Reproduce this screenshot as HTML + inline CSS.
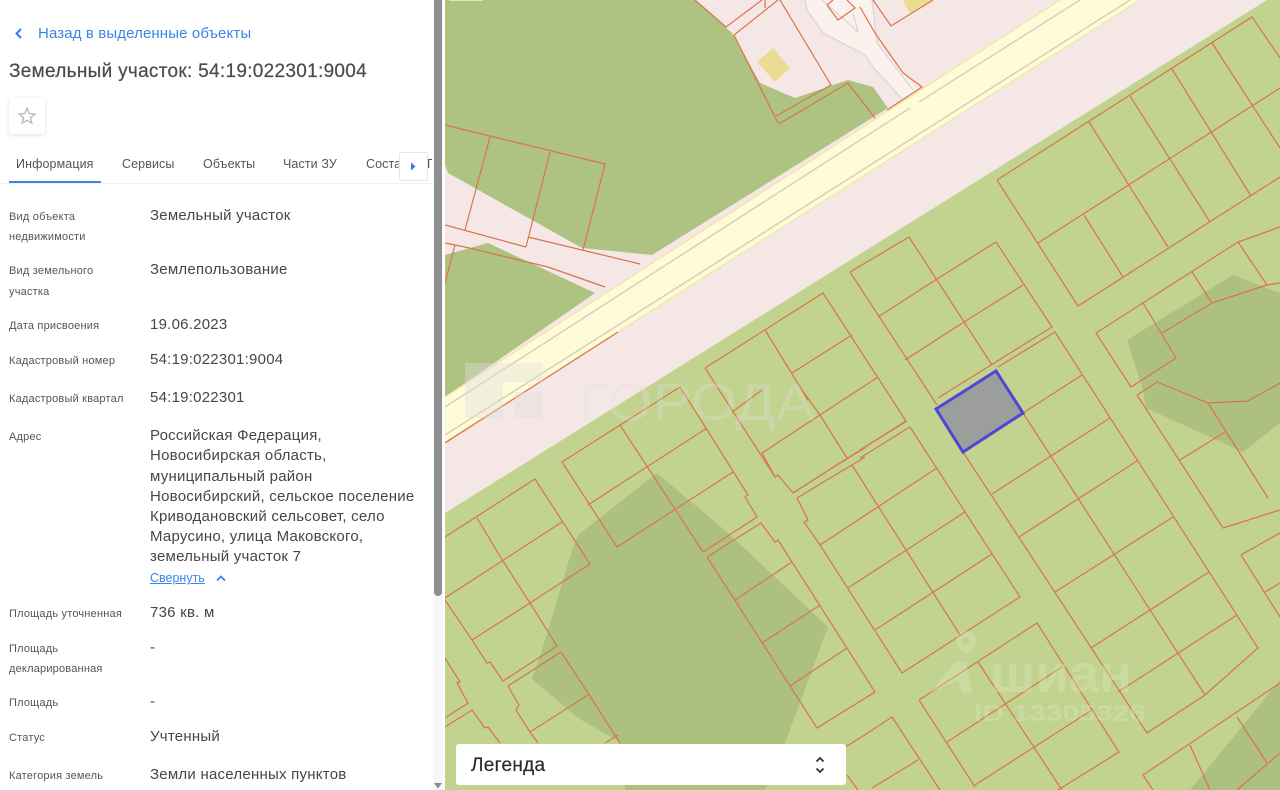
<!DOCTYPE html>
<html lang="ru"><head><meta charset="utf-8"><title>Земельный участок</title>
<style>
html,body{margin:0;padding:0;width:1280px;height:790px;overflow:hidden;background:#fff}
body{font-family:"Liberation Sans","DejaVu Sans",sans-serif;position:relative}
#map{position:absolute;left:445px;top:0;width:835px;height:790px;filter:blur(.35px)}
#panel{position:absolute;left:0;top:0;width:445px;height:790px;background:#fff;overflow:hidden}
.t{position:absolute;white-space:nowrap;line-height:20px;height:20px;filter:blur(.25px)}
.l{left:9px;font-size:11px;color:#555;letter-spacing:.2px;margin-top:1px}
.v{left:150px;font-size:15px;color:#464646;letter-spacing:.24px;margin-top:1px}
.tab{top:154px;font-size:12.5px;color:#555;letter-spacing:.1px}
#legend{position:absolute;left:456px;top:744px;width:390px;height:41px;background:#fff;border-radius:3px}
</style></head><body>
<svg id="map" viewBox="445 0 835 790" xmlns="http://www.w3.org/2000/svg">
<rect x="445" y="0" width="835" height="790" fill="#c2d38f"/>
<polygon points="445,513 1267,0 445,0" fill="#f5e7e6"/>
<polygon points="805,0 807,10 823,33 865,55 873,67 903,100 918,90 877,43 872,0" fill="#fbf1ed"/>
<polygon points="445,0 695,0 732,33 760,83 795,98 848,80 873,87 888,108 652,255 582,248 532,220 448,173 445,165" fill="#aec281"/>
<polygon points="445,255 488,243 595,293 445,397" fill="#aec281"/>
<polygon points="578,535 657,473 728,533 828,627 785,743 765,790 625,790 622,743 578,718 532,679 542,650 555,607 572,550" fill="#aec080"/>
<polygon points="1233,275 1280,293 1280,423 1243,452 1146,408 1143,390 1127,340" fill="#aec080"/>
<polygon points="1280,680 1190,790 1280,790" fill="#aec080"/>
<polygon points="445,397 1060,0 1140,0 445,442" fill="#fffbd9"/>
<path d="M445,397L1060,0M445,442L1140,0" stroke="#f3e5a2" stroke-width="1.2" fill="none"/>
<path d="M445,407L910,108M919,102L1080,0M445,435L1130,0" stroke="#cfd4b4" stroke-width="1.5" fill="none"/>
<path d="M805,0L807,10L823,33L865,55L873,67L903,100M822,0L858,32L853,13M872,0L877,43L913,90" stroke="#dcd7d4" stroke-width="1.3" fill="none"/>
<polygon points="773,48 790,68 775,82 757,62" fill="#ebdc93"/>
<polygon points="903,0 933,0 910,14" fill="#ebdc93"/>
<g fill="none" stroke="#d9744a" stroke-width="1.2">
<path d="M445,125L605,164L583,250M490,137L465,230M550,152L526,247M445,225L526,247M528,237L640,264M445,243L465,247L548,267L605,287M455,245L445,283"/>
<path d="M695,0L726,27L762,0M765,0L765,8M778,0L734,35L778,123M780,0L831,85L776,116M779,124L848,83L875,118M827,5L838,20L855,8L847,0M833,0L827,5M873,0L891,26L933,0M860,7L875,33L903,73L922,87L887,110"/>
<path d="M445,443L618,332"/>
<path d="M997,180L1252,17L1280,58M997,180L1078,306L1280,177M1038,243L1280,88M1089,122L1168,247M1130,96L1210,222M1172,69L1251,196M1212,43L1280,148M1084,215L1123,277"/>
<path d="M1280,227L1238,242L1096,333L1131,387L1176,358L1143,303M1238,242L1267,285L1280,283L1267,285L1212,303L1192,272M1162,333L1212,303M1137,395L1157,382L1208,403L1248,401L1280,383M1137,395L1223,528L1280,510M1208,403L1268,498M1180,460L1225,432M1280,533L1241,555L1280,617M1265,592L1280,583M1280,683L1143,775L1153,790M1190,745L1210,790M1237,717L1267,763M1237,790L1280,753"/>
<path d="M850,272L909,237L992,365M996,242L1052,327L938,398M937,279L996,242M878,317L937,279M964,322L1023,285M905,360L964,322M850,272L937,405"/>
<path d="M998,367L1055,332L1258,648L1205,695L1147,733L963,452M1023,413L1205,695M1023,413L1082,375M992,494L1110,418M1019,537L1137,461M1055,592L1173,517M1091,648L1209,572M1118,692L1237,615"/>
<path d="M910,427L1020,597L902,673L820,545M910,427L860,458M907,421L860,450M852,465L960,635M937,468L820,545M965,512L848,588M992,554L875,630"/>
<path d="M705,368L823,293L906,421L793,493L778,475L775,477L732,410L705,368M765,330L808,400M792,373L852,335"/>
<path d="M562,462L680,387L748,495L745,497L757,517L703,552L620,425M562,462L617,547L733,472M588,505L707,428"/>
<path d="M707,557L761,523L775,542L778,540L792,562L875,692L817,728L707,557M735,600L792,562M762,643L820,605M790,686L847,648"/>
<path d="M797,498L852,465L865,457M797,498L808,520L804,522L820,545M793,493L848,458L865,448M762,453L878,377M820,415L847,458M802,390L820,415M732,412L762,390M775,477L762,453"/>
<path d="M860,738L892,717L940,790M918,760L872,788M847,775L858,790M845,747L860,738"/>
<path d="M919,700L1037,623L1119,752L1045,798M919,700L975,787M978,662L1062,790M1062,667L947,742M1092,710L975,785"/>
<path d="M445,537L535,479L590,564L530,603L472,640M445,600L472,640L487,663L490,662L503,681L557,646L530,603M477,518L503,561L530,603M562,522L445,598"/>
<path d="M508,686L561,652L588,693L618,740L630,760M508,686L519,705L516,710L530,732L538,743M530,732L588,695M605,743L618,735"/>
<path d="M445,658L460,682L457,683L468,703L445,718M445,727L472,710L485,728L488,727L500,743"/>
</g>
<polygon points="936,409 996,371 1023,413 963,452" fill="#9c9e9c" stroke="#5046d6" stroke-width="3"/>
<rect x="449" y="-1" width="34" height="2" fill="#dfe5c8"/>
<g fill="rgba(222,222,222,.4)"><path d="M465,363H543V382H503V418H465Z"/><rect x="515" y="392" width="28" height="26"/></g>
<text x="578" y="420" font-size="52" fill="rgba(228,228,228,.28)" textLength="237" lengthAdjust="spacingAndGlyphs" font-family="Liberation Sans,sans-serif">ГОРОДА</text>
<g fill="rgba(225,235,200,.32)">
<path d="M966,631c6,0 10,5 10,10c0,5-5,9-10,14c-5-5-10-9-10-14c0-5 4-10 10-10Zm0,6a4,4 0 1,0 .1,0Z"/>
<path d="M930,693L956,662H966L972,693H962L958,680Z"/>
</g>
<text x="990" y="692" font-size="54" font-weight="bold" fill="rgba(225,235,200,.3)" textLength="142" lengthAdjust="spacingAndGlyphs" font-family="Liberation Sans,sans-serif">шиан</text>
<text x="974" y="721" font-size="23" font-weight="bold" fill="rgba(225,235,200,.3)" textLength="172" lengthAdjust="spacingAndGlyphs" font-family="Liberation Sans,sans-serif">ID 13305326</text>
</svg>
<div id="panel">
<svg style="position:absolute;left:13px;top:27px" width="12" height="13" viewBox="0 0 12 13"><path d="M8,2L3.5,6.5L8,11" fill="none" stroke="#2f80e4" stroke-width="2"/></svg>
<div class="t" style="left:38px;top:24px;font-size:15px;color:#3a86e6;letter-spacing:.12px">Назад в выделенные объекты</div>
<div class="t" style="left:9px;top:62px;font-size:19px;color:#4a4a48;letter-spacing:.3px;-webkit-text-stroke:.2px #4a4a48">Земельный участок: 54:19:022301:9004</div>
<div style="position:absolute;left:9px;top:98px;width:36px;height:36px;background:#fff;border-radius:3px;box-shadow:0 1px 5px rgba(0,0,0,.12)"></div>
<svg style="position:absolute;left:17px;top:106px" width="20" height="20" viewBox="0 0 20 20"><path d="M10,2.2L12.2,7.5L17.8,8L13.5,11.7L14.9,17.2L10,14.3L5.1,17.2L6.5,11.7L2.2,8L7.8,7.5Z" fill="none" stroke="#bbb" stroke-width="1.4"/></svg>
<div class="t tab" style="left:16px">Информация</div>
<div class="t tab" style="left:122px">Сервисы</div>
<div class="t tab" style="left:203px">Объекты</div>
<div class="t tab" style="left:283px">Части ЗУ</div>
<div class="t tab" style="left:366px">Состав</div>
<div class="t tab" style="left:427px;width:5px;overflow:hidden">П</div>
<div style="position:absolute;left:0;top:183px;width:433px;height:1px;background:#eef0f2"></div>
<div style="position:absolute;left:9px;top:181px;width:92px;height:2px;background:#3a86e6"></div>
<div style="position:absolute;left:399px;top:152px;width:27px;height:27px;background:#fff;border:1px solid #dfe6ef;border-radius:3px"></div>
<svg style="position:absolute;left:409px;top:161px" width="8" height="10" viewBox="0 0 8 10"><path d="M2,1.5L6.5,5.5L2,9.5Z" fill="#2f80e4"/></svg>
<div class="t l" style="top:206px">Вид объекта</div><div class="t l" style="top:226px">недвижимости</div>
<div class="t v" style="top:205px">Земельный участок</div>
<div class="t l" style="top:260px">Вид земельного</div><div class="t l" style="top:281px">участка</div>
<div class="t v" style="top:259px">Землепользование</div>
<div class="t l" style="top:315px">Дата присвоения</div><div class="t v" style="top:314px">19.06.2023</div>
<div class="t l" style="top:350px">Кадастровый номер</div><div class="t v" style="top:349px">54:19:022301:9004</div>
<div class="t l" style="top:388px">Кадастровый квартал</div><div class="t v" style="top:387px">54:19:022301</div>
<div class="t l" style="top:426px">Адрес</div>
<div class="t v" style="top:425px">Российская Федерация,</div>
<div class="t v" style="top:445px">Новосибирская область,</div>
<div class="t v" style="top:466px">муниципальный район</div>
<div class="t v" style="top:486px">Новосибирский, сельское поселение</div>
<div class="t v" style="top:506px">Криводановский сельсовет, село</div>
<div class="t v" style="top:526px">Марусино, улица Маковского,</div>
<div class="t v" style="top:546px">земельный участок 7</div>
<div class="t" style="left:150px;top:568px;font-size:12.5px;color:#3a86e6;text-decoration:underline">Свернуть</div>
<svg style="position:absolute;left:215px;top:574px" width="12" height="9" viewBox="0 0 12 9"><path d="M2,6.5L6,2.5L10,6.5" fill="none" stroke="#3a86e6" stroke-width="1.8"/></svg>
<div class="t l" style="top:603px">Площадь уточненная</div><div class="t v" style="top:602px">736 кв. м</div>
<div class="t l" style="top:638px">Площадь</div><div class="t l" style="top:658px">декларированная</div><div class="t v" style="top:637px">-</div>
<div class="t l" style="top:692px">Площадь</div><div class="t v" style="top:691px">-</div>
<div class="t l" style="top:727px">Статус</div><div class="t v" style="top:726px">Учтенный</div>
<div class="t l" style="top:765px">Категория земель</div><div class="t v" style="top:764px">Земли населенных пунктов</div>
<div style="position:absolute;left:433px;top:0;width:10px;height:790px;background:#f7f7f7"></div>
<div style="position:absolute;left:434px;top:0;width:8px;height:596px;background:#8f8f8f;border-radius:0 0 4px 4px"></div>
<svg style="position:absolute;left:433px;top:782px" width="10" height="8" viewBox="0 0 10 8"><path d="M1,1H9L5,6.5Z" fill="#8a8a8a"/></svg>
</div>
<div id="legend"></div>
<div class="t" style="left:471px;top:756px;font-size:19px;color:#2b2b2b;letter-spacing:.3px;-webkit-text-stroke:.2px #2b2b2b">Легенда</div>
<svg style="position:absolute;left:812px;top:755px" width="16" height="20" viewBox="0 0 16 20"><path d="M4.5,6.5L8,3L11.5,6.5M4.5,13.5L8,17L11.5,13.5" fill="none" stroke="#333" stroke-width="1.8"/></svg>
</body></html>
